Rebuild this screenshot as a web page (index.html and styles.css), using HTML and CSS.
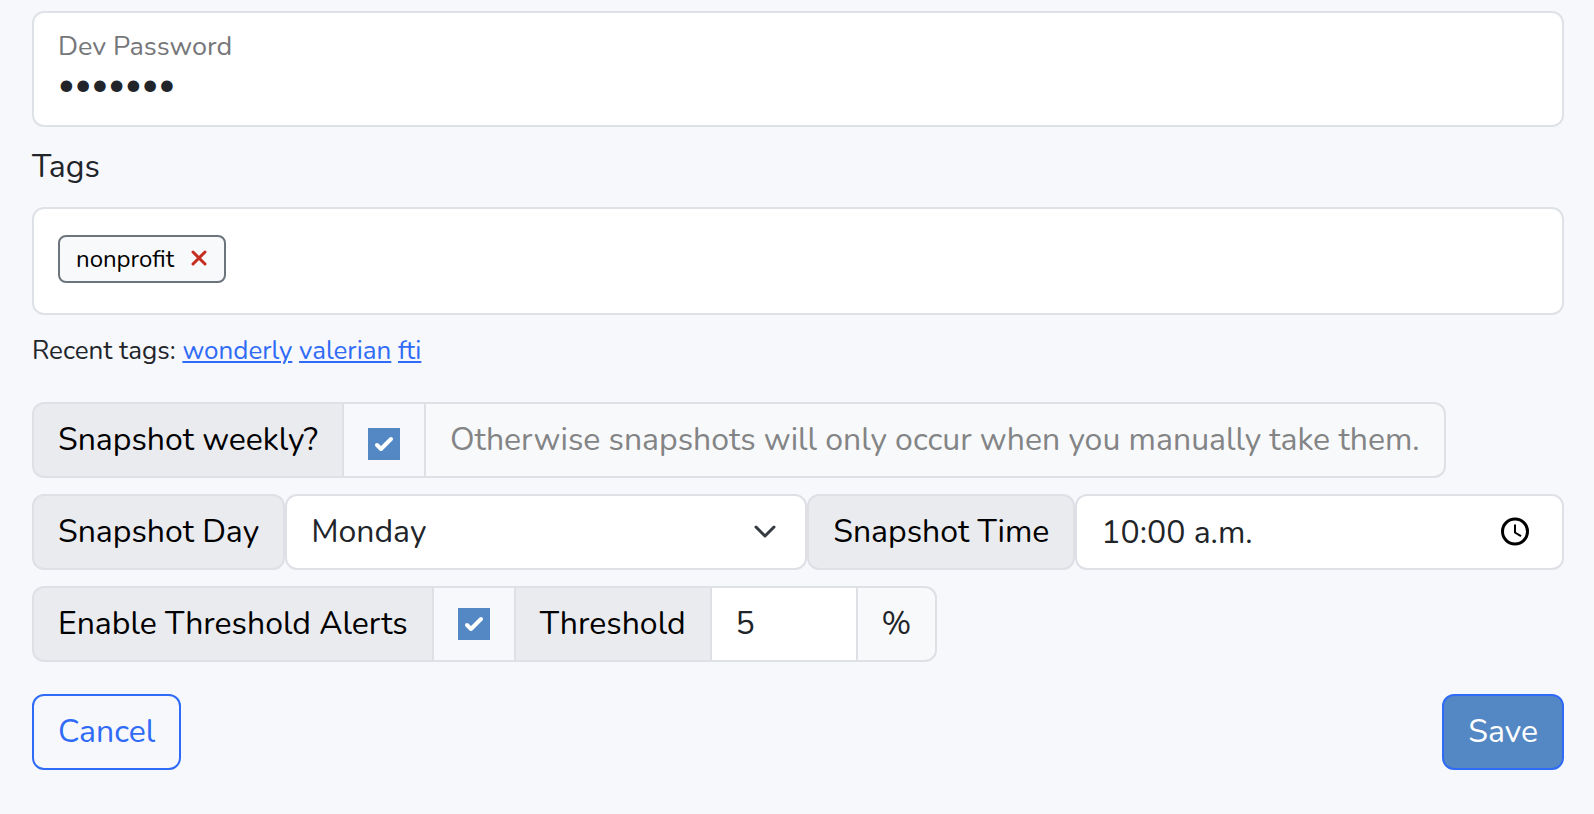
FILE: index.html
```html
<!DOCTYPE html>
<html lang="en">
<head>
  <meta charset="UTF-8">
  <meta name="viewport" content="width=device-width, initial-scale=1.0">
  <title>Edit site</title>
  <link rel="stylesheet" href="styles.css">
</head>
<body>
  <form class="site-form">
    <div class="form-floating">
      <label for="devPassword">Dev Password</label>
      <input type="password" id="devPassword" value="example">
    </div>

    <label class="form-label" for="tagInput">Tags</label>
    <div class="tag-box">
      <span class="tag">
        nonprofit
        <button type="button" class="tag-remove" aria-label="Remove nonprofit">
          <svg viewBox="0 0 16 16"><path d="M2 2 14 14M14 2 2 14"/></svg>
        </button>
      </span>
      <input type="text" id="tagInput" class="tag-input">
    </div>
    <p class="recent-tags">Recent tags: <a href="#">wonderly</a> <a href="#">valerian</a> <a href="#">fti</a></p>

    <div class="input-group joined">
      <label class="addon" for="weekly">Snapshot weekly?</label>
      <div class="check-cell check-cell-text"><input type="checkbox" id="weekly" checked></div>
      <span class="hint">Otherwise snapshots will only occur when you manually take them.</span>
    </div>

    <div class="input-group">
      <label class="addon" for="day">Snapshot Day</label>
      <div class="select-wrap">
        <select id="day">
          <option>Sunday</option>
          <option selected>Monday</option>
          <option>Tuesday</option>
          <option>Wednesday</option>
          <option>Thursday</option>
          <option>Friday</option>
          <option>Saturday</option>
        </select>
        <svg class="chevron" viewBox="0 0 24 24"><path d="M3 7l9 9 9-9"/></svg>
      </div>
      <label class="addon" for="time">Snapshot Time</label>
      <div class="time-wrap">
        <input type="text" id="time" value="10:00 a.m.">
        <button type="button" class="time-button" aria-label="Pick a time">
          <svg viewBox="0 0 28 28"><circle cx="14" cy="13.5" r="12.5"/><path class="hands" d="M14 6.500v8l6 3.600"/></svg>
        </button>
      </div>
    </div>

    <div class="input-group joined">
      <label class="addon" for="alerts">Enable Threshold Alerts</label>
      <div class="check-cell"><input type="checkbox" id="alerts" checked></div>
      <label class="addon" for="threshold">Threshold</label>
      <input type="text" id="threshold" class="threshold" inputmode="numeric" value="5">
      <span class="unit">%</span>
    </div>

    <div class="actions">
      <button type="button" class="btn btn-outline">Cancel</button>
      <button type="submit" class="btn btn-primary">Save</button>
    </div>
  </form>
</body>
</html>
```

FILE: styles.css
```css
* {
  box-sizing: border-box;
}
body {
  margin: 0;
  background: #f7f8fc;
  color: #212529;
  font-family: Nunito, Lato, sans-serif;
  font-size: 32px;
  line-height: 48px;
}
input, select, button {
  font: inherit;
  color: inherit;
}
.site-form {
  padding: 11px 30px 44px 32px;
}

/* text fields */
.form-floating {
  display: flex;
  flex-direction: column;
  padding: 14px 24px 22px;
  border: 2px solid #dee2e6;
  border-radius: 12px;
  background: #fff;
}
.form-floating label {
  color: #76777a;
  font-size: 27px;
  line-height: 40px;
}
.form-floating input {
  width: 100%;
  height: 36px;
  padding: 0;
  border: 0;
  outline: 0;
  background: none;
}
.form-label {
  display: block;
  margin: 16px 0;
}
.tag-box {
  display: flex;
  align-items: flex-start;
  padding: 26px 24px 30px;
  border: 2px solid #dee2e6;
  border-radius: 12px;
  background: #fff;
}
.tag {
  display: flex;
  align-items: center;
  gap: 16px;
  height: 48px;
  padding: 0 16px;
  border: 2px solid #6c757d;
  border-radius: 8px;
  background: #f8f9fa;
  color: #000;
  font-size: 24px;
}
.tag-remove {
  display: flex;
  padding: 0 1px 2px;
  border: 0;
  background: none;
}
.tag-remove svg {
  width: 16px;
  height: 16px;
  fill: none;
  stroke: #c62d22;
  stroke-width: 3;
  stroke-linecap: round;
}
.tag-input {
  flex: 1;
  min-width: 0;
  height: 48px;
  border: 0;
  outline: 0;
  background: none;
}
.recent-tags {
  margin: 16px 0 32px;
  font-size: 26px;
  line-height: 39px;
}
.recent-tags a {
  color: #2f6bf6;
  text-decoration-thickness: 2px;
  text-underline-offset: 2px;
}

/* input groups */
.input-group {
  display: flex;
  height: 76px;
  margin-bottom: 16px;
}
.addon, .hint, .unit, .check-cell, .select-wrap, .time-wrap, .threshold {
  display: flex;
  align-items: center;
  border: 2px solid #dee0e6;
  border-radius: 12px;
}
.addon, .hint, .unit {
  padding: 0 24px;
  white-space: nowrap;
}
.addon {
  background: #eaebef;
  color: #000;
}
.hint {
  background: #f8f9fb;
  color: #838485;
}
.unit {
  background: #f8f9fb;
}
.joined > * {
  border-radius: 0;
}
.joined > * + * {
  margin-left: -2px;
}
.joined > :first-child {
  border-radius: 12px 0 0 12px;
}
.joined > :last-child {
  border-radius: 0 12px 12px 0;
}
.check-cell {
  padding: 0 24px;
}
.check-cell-text {
  padding-top: 8px;
}
.check-cell input {
  appearance: none;
  width: 32px;
  height: 32px;
  margin: 0;
  background: #5488c4 url("data:image/svg+xml,%3Csvg xmlns='http://www.w3.org/2000/svg' viewBox='0 0 32 32'%3E%3Cpath d='M9 17l4 4 10-10' fill='none' stroke='%23fff' stroke-width='4' stroke-linecap='round' stroke-linejoin='round'/%3E%3C/svg%3E") center / 32px;
}
.select-wrap, .time-wrap {
  position: relative;
  min-width: 0;
  background: #fff;
}
.select-wrap {
  flex: 31 1 0;
}
.time-wrap {
  flex: 29 1 0;
}
.select-wrap select, .time-wrap input {
  appearance: none;
  width: 100%;
  height: 72px;
  padding: 0 24px;
  border: 0;
  outline: 0;
  background: none;
}
.chevron {
  position: absolute;
  right: 28px;
  width: 24px;
  height: 24px;
  fill: none;
  stroke: #343a40;
  stroke-width: 3;
  stroke-linecap: round;
  stroke-linejoin: round;
  pointer-events: none;
}
.time-button {
  display: flex;
  padding: 0 33px 0 0;
  border: 0;
  background: none;
}
.time-button svg {
  width: 28px;
  height: 28px;
  overflow: visible;
  fill: none;
  stroke: #000;
  stroke-width: 3;
}
.time-button .hands {
  stroke-width: 2;
}
.threshold {
  width: 148px;
  padding: 0 24px;
  outline: 0;
  background: #fff;
}

/* buttons */
.actions {
  display: flex;
  justify-content: space-between;
  margin-top: 32px;
}
.btn {
  height: 76px;
  padding: 0 24px;
  border: 2px solid #2f6bf6;
  border-radius: 12px;
}
.btn-outline {
  background: none;
  color: #2f6bf6;
}
.btn-primary {
  background: #5488c4;
  color: #fff;
}
```
